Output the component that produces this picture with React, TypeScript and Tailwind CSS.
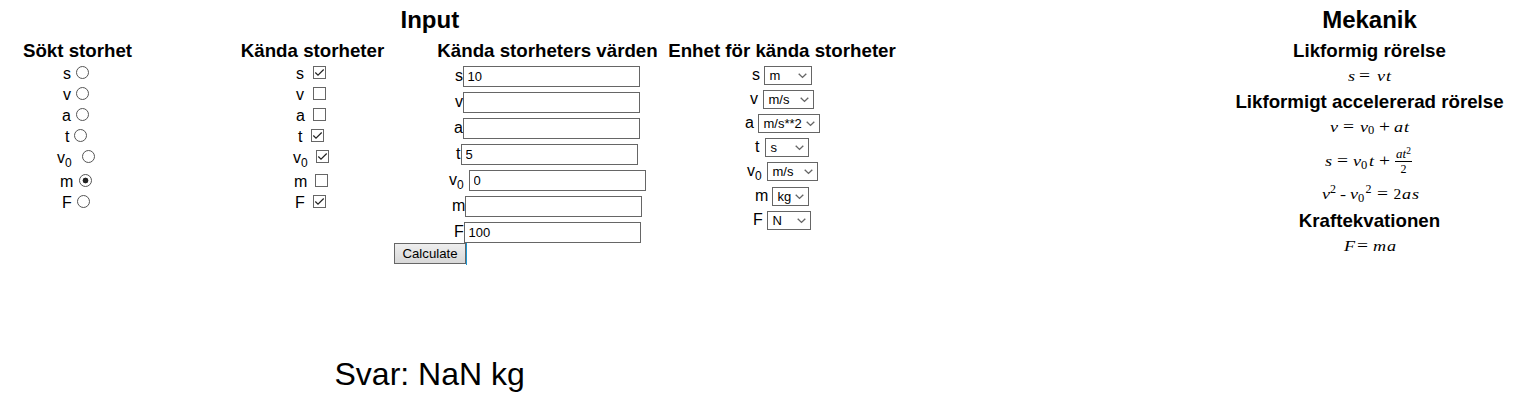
import React from 'react';

type Name = 's' | 'v' | 'a' | 't' | 'v0' | 'm' | 'F';

function Symbol({ name, className }: { name: Name; className: string }) {
  return (
    <span className={`shrink-0 whitespace-nowrap text-[16px] leading-[18px] ${className}`}>
      {name === 'v0' ? (
        <>
          v<span className="relative top-[4px] inline-block origin-left scale-x-90 text-[13.33px] leading-none">0</span>
        </>
      ) : (
        name
      )}
    </span>
  );
}

function Heading({ children, className = 'pl-px' }: { children: React.ReactNode; className?: string }) {
  return (
    <h3 className={`flex h-[24px] justify-center whitespace-nowrap text-[18.72px] font-bold leading-[25px] ${className}`}>
      {children}
    </h3>
  );
}

const radios: { name: Name; row: string; label: string; on?: boolean }[] = [
  { name: 's', row: 'h-[21px] pl-[63px]', label: 'w-[13px]' },
  { name: 'v', row: 'h-[21px] pl-[63px]', label: 'w-[13px]' },
  { name: 'a', row: 'h-[21px] pl-[62px]', label: 'w-[14px]' },
  { name: 't', row: 'h-[21px] pl-[65px]', label: 'w-[9px]' },
  { name: 'v0', row: 'h-[24px] pl-[57px]', label: 'w-[25px]' },
  { name: 'm', row: 'h-[21px] pl-[60px]', label: 'w-[19px]', on: true },
  { name: 'F', row: 'h-[21px] pl-[62px]', label: 'w-[15px]' },
];

const checks: { name: Name; row: string; label: string; on?: boolean }[] = [
  { name: 's', row: 'h-[21px] pl-[140px]', label: 'w-[17px]', on: true },
  { name: 'v', row: 'h-[21px] pl-[140px]', label: 'w-[17px]' },
  { name: 'a', row: 'h-[21px] pl-[140px]', label: 'w-[17px]' },
  { name: 't', row: 'h-[21px] pl-[142px]', label: 'w-[13px]', on: true },
  { name: 'v0', row: 'h-[24px] pl-[137px]', label: 'w-[23px]', on: true },
  { name: 'm', row: 'h-[21px] pl-[138px]', label: 'w-[21px]' },
  { name: 'F', row: 'h-[21px] pl-[139px]', label: 'w-[18px]', on: true },
];

const fields: { name: Name; row: string; label: string; value: string }[] = [
  { name: 's', row: '-ml-[14px]', label: 'w-[8px]', value: '10' },
  { name: 'v', row: '-ml-[14px]', label: 'w-[8px]', value: '' },
  { name: 'a', row: '-ml-[15px]', label: 'w-[9px]', value: '' },
  { name: 't', row: '-ml-[13px]', label: 'w-[5px]', value: '5' },
  { name: 'v0', row: '-ml-[20px]', label: 'w-[20px]', value: '0' },
  { name: 'm', row: '-ml-[17px]', label: 'w-[13px]', value: '' },
  { name: 'F', row: '-ml-[15px]', label: 'w-[10px]', value: '100' },
];

const units: { name: Name; row: string; label: string; box: string; unit: string }[] = [
  { name: 's', row: 'h-[24px] pl-[127px]', label: 'w-[12px]', box: 'w-[48px]', unit: 'm' },
  { name: 'v', row: 'h-[24px] pl-[125px]', label: 'w-[13px]', box: 'w-[51px]', unit: 'm/s' },
  { name: 'a', row: 'h-[24px] pl-[120px]', label: 'w-[13px]', box: 'w-[62px]', unit: 'm/s**2' },
  { name: 't', row: 'h-[24px] pl-[130px]', label: 'w-[10px]', box: 'w-[44px]', unit: 's' },
  { name: 'v0', row: 'h-[25px] pl-[122px]', label: 'w-[20px]', box: 'w-[51px]', unit: 'm/s' },
  { name: 'm', row: 'h-[24px] pl-[130px]', label: 'w-[17px]', box: 'w-[37px]', unit: 'kg' },
  { name: 'F', row: 'h-[24px] pl-[128px]', label: 'w-[14px]', box: 'w-[44px]', unit: 'N' },
];

function Eq({ children, className = '' }: { children: React.ReactNode; className?: string }) {
  return (
    <div className={`flex items-center whitespace-nowrap font-['Liberation_Serif',serif] text-[15.5px] italic leading-[20px] ${className}`}>
      {children}
    </div>
  );
}

function Term({ children, className }: { children: string; className: string }) {
  return (
    <span className={`shrink-0 ${className}`}>
      <span className="inline-block origin-left scale-x-[1.17]">{children}</span>
    </span>
  );
}

function Op({ children, className }: { children: string; className: string }) {
  return (
    <span className={`shrink-0 not-italic ${className}`}>
      <span className="inline-block origin-left scale-x-[1.22] text-[16px]">{children}</span>
    </span>
  );
}

function Low({ className }: { className: string }) {
  return <span className={`relative top-[4px] shrink-0 text-[12.5px] not-italic leading-none ${className}`}>0</span>;
}

function High({ className }: { className: string }) {
  return <span className={`relative -top-[5px] shrink-0 text-[12px] not-italic leading-none ${className}`}>2</span>;
}

export default function App() {
  return (
    <main className="h-[413px] w-[1517px] overflow-hidden bg-white font-['Liberation_Sans',Arial,sans-serif] text-black">
      <div className="flex h-[340px]">
        <section className="w-[938px] shrink-0">
          <h2 className="h-[38px] pl-[400.5px] pt-[6px] text-[24px] font-bold leading-[28px]">Input</h2>
          <div className="grid grid-cols-[156px_313px_156px_313px]">
            <div>
              <Heading className="pr-px">Sökt storhet</Heading>
              {radios.map((r) => (
                <div key={r.name} className={`flex items-start ${r.row}`}>
                  <Symbol name={r.name} className={`mt-[3px] ${r.label}`} />
                  <input
                    type="radio"
                    name="target"
                    defaultChecked={r.on}
                    className="mt-[4px] size-[13px] shrink-0 appearance-none rounded-full border border-[#555] bg-white checked:bg-[radial-gradient(circle,#222_2.6px,transparent_3.2px)]"
                  />
                </div>
              ))}
            </div>
            <div>
              <Heading className="">Kända storheter</Heading>
              {checks.map((c) => (
                <div key={c.name} className={`flex items-start ${c.row}`}>
                  <Symbol name={c.name} className={`mt-[3px] ${c.label}`} />
                  <span role="checkbox" aria-checked={!!c.on} className="mt-[4px] size-[13px] shrink-0 border border-[#666]">
                    {c.on && (
                      <svg viewBox="0 0 11 11" className="block size-[11px]">
                        <path d="M1.3 5.5 4 8.2 9.7 2.5" fill="none" stroke="#222" strokeWidth="1.2" />
                      </svg>
                    )}
                  </span>
                </div>
              ))}
            </div>
            <div>
              <Heading>Kända storheters värden</Heading>
              <div className="flex flex-col gap-[5px] pt-[4px]">
                {fields.map((f) => (
                  <div key={f.name} className={`flex h-[21px] items-start ${f.row}`}>
                    <Symbol name={f.name} className={`mt-px ${f.label}`} />
                    <input
                      defaultValue={f.value}
                      className="h-[21px] w-[177px] shrink-0 border border-[#666] bg-white px-[3.5px] py-0 text-[13px] outline-none"
                    />
                  </div>
                ))}
              </div>
              <div className="-ml-[75px] flex">
                <button className="h-[21px] w-[72px] border border-[#666] bg-linear-to-b from-[#eee] to-[#d8d8d8] text-[13.2px] leading-[19px]">
                  Calculate
                </button>
                <span className="h-[22px] w-px bg-[#1c97d5]" />
              </div>
            </div>
            <div>
              <Heading>Enhet för kända storheter</Heading>
              <div className="pt-[4px]">
                {units.map((u) => (
                  <div key={u.name} className={`flex items-start ${u.row}`}>
                    <Symbol name={u.name} className={u.label} />
                    <button
                      className={`flex h-[19px] shrink-0 items-center justify-between border border-[#666] bg-white pl-[4.5px] pr-[4px] text-[13px] leading-[17px] ${u.box}`}
                    >
                      <span>{u.unit}</span>
                      <svg viewBox="0 0 9 6" className="h-[6px] w-[9px] shrink-0">
                        <path d="M.7.8 4.5 4.4 8.3.8" fill="none" stroke="#666" strokeWidth="1.4" />
                      </svg>
                    </button>
                  </div>
                ))}
              </div>
            </div>
          </div>
        </section>
        <section className="ml-[283px] w-[296px] shrink-0">
          <h2 className="h-[38px] pl-px pt-[6px] text-center text-[24px] font-bold leading-[28px]">Mekanik</h2>
          <Heading>Likformig rörelse</Heading>
          <Eq className="h-[27px] pl-[127px]">
            <Term className="w-[10.5px]">s</Term>
            <Op className="w-[18px]">=</Op>
            <Term className="w-[9px]">v</Term>
            <Term className="w-[6px]">t</Term>
          </Eq>
          <Heading>Likformigt accelererad rörelse</Heading>
          <Eq className="h-[27px] pl-[108.5px]">
            <Term className="w-[13.5px]">v</Term>
            <Op className="w-[16.5px]">=</Op>
            <Term className="w-[8.5px]">v</Term>
            <Low className="w-[11px]" />
            <Op className="w-[15px]">+</Op>
            <Term className="w-[9.5px]">a</Term>
            <Term className="w-[6px]">t</Term>
          </Eq>
          <Eq className="h-[42px] pl-[104px]">
            <Term className="w-[12px]">s</Term>
            <Op className="w-[15.5px]">=</Op>
            <Term className="w-[8.5px]">v</Term>
            <Low className="w-[8px]" />
            <Term className="w-[10px]">t</Term>
            <Op className="w-[16px]">+</Op>
            <span className="flex w-[17px] flex-col items-center text-[13px] leading-[14px]">
              <span className="h-[15px] w-full border-b border-black text-center">
                at<span className="relative -top-[4px] text-[9.5px] not-italic leading-none">2</span>
              </span>
              <span className="text-[12px] not-italic">2</span>
            </span>
          </Eq>
          <Eq className="h-[24px] pl-[100.5px]">
            <Term className="w-[8.5px]">v</Term>
            <High className="w-[9.5px]" />
            <Term className="w-[10px]">-</Term>
            <Term className="w-[8.5px]">v</Term>
            <Low className="w-[7.5px]" />
            <High className="w-[11.5px]" />
            <Op className="w-[16.5px]">=</Op>
            <span className="w-[8.5px] shrink-0 not-italic">2</span>
            <Term className="w-[9.5px]">a</Term>
            <Term className="w-[7px]">s</Term>
          </Eq>
          <Heading className="mt-[2px] pl-px">Kraftekvationen</Heading>
          <Eq className="h-[27px] pl-[122.5px]">
            <Term className="w-[13.5px]">F</Term>
            <Op className="w-[16px]">=</Op>
            <Term className="w-[13.5px]">m</Term>
            <Term className="w-[9px]">a</Term>
          </Eq>
        </section>
      </div>
      <p className="pl-[334.5px] pt-[15px] text-[32px] leading-[38px]">Svar: NaN kg</p>
    </main>
  );
}
